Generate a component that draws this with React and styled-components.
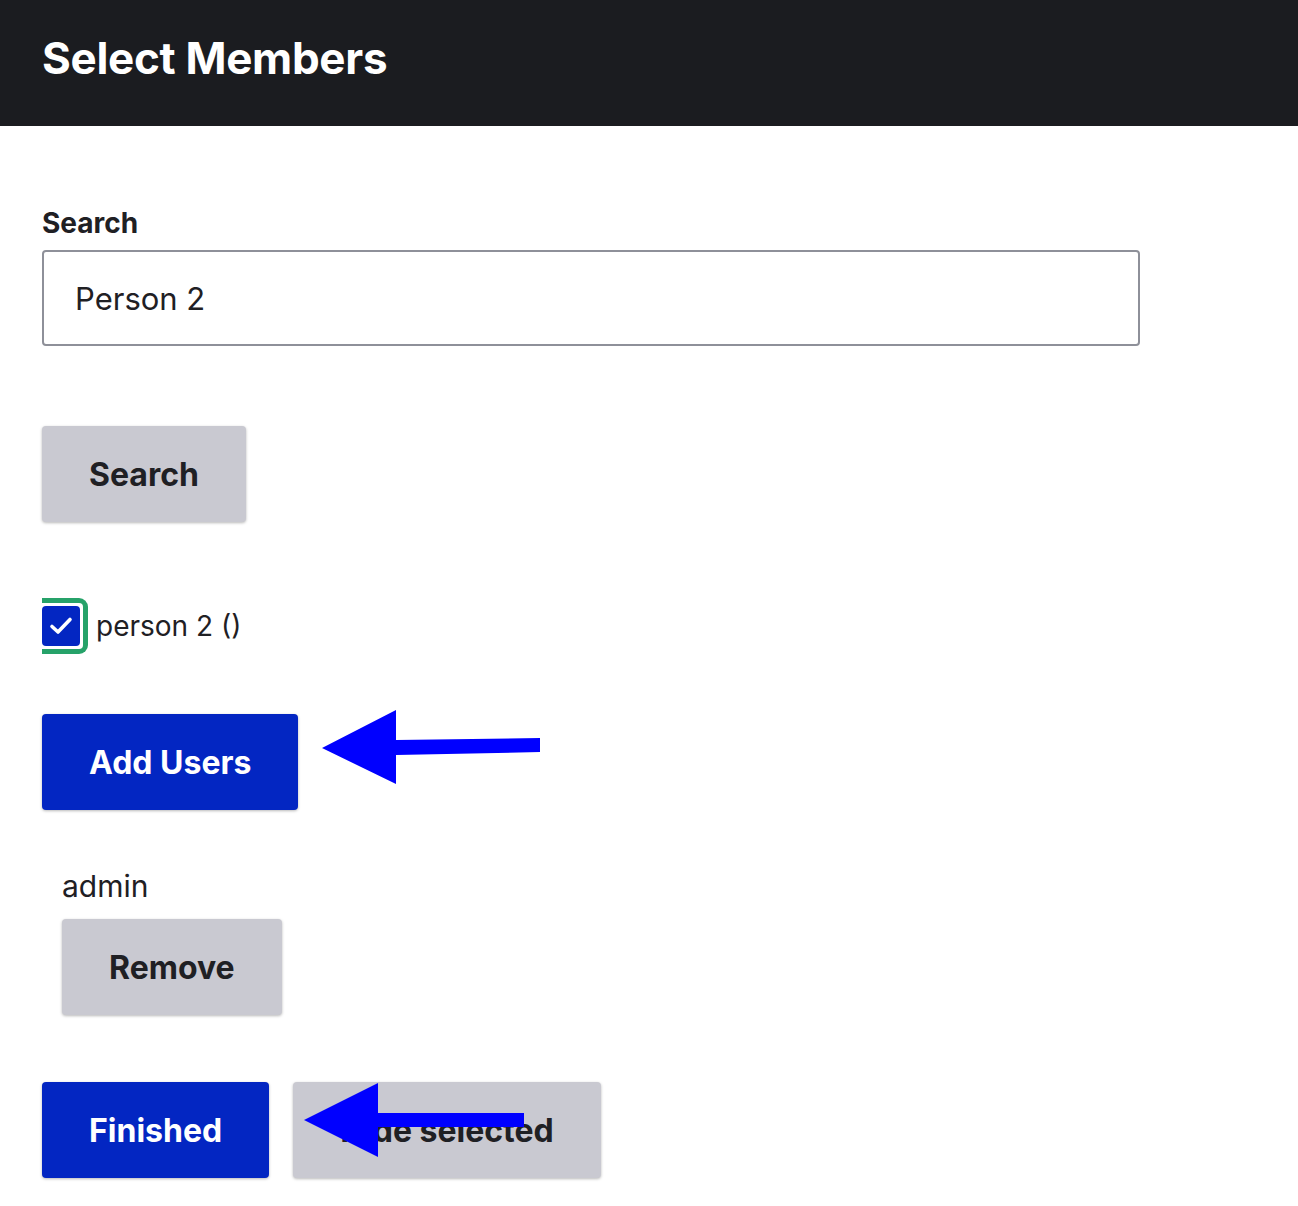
import React from "react";
import styled, { createGlobalStyle } from "styled-components";

const GlobalStyle = createGlobalStyle`
  body {
    margin: 0;
    background: #ffffff;
    font-family: Inter, "Noto Sans", "Liberation Sans", sans-serif;
    color: #1f2024;
  }
`;

const Header = styled.header`
  background: #1b1c20;
  height: 126px;
  display: flex;
  align-items: center;
  padding: 0 42px;
  box-sizing: border-box;
`;

const Title = styled.h1`
  margin: 0;
  color: #ffffff;
  font-size: 44px;
  font-weight: 700;
  letter-spacing: -0.3px;
  padding-bottom: 10px;
`;

const Main = styled.main`
  display: flex;
  flex-direction: column;
  align-items: flex-start;
  padding: 80px 42px 40px;
`;

const Label = styled.label`
  font-size: 28px;
  font-weight: 700;
  line-height: 34px;
  margin-bottom: 10px;
`;

const Input = styled.input`
  width: 1098px;
  height: 96px;
  box-sizing: border-box;
  border: 2px solid #8e9099;
  border-radius: 4px;
  padding: 0 31px;
  font-family: inherit;
  font-size: 31px;
  color: #1f2024;
  outline: none;
`;

const Button = styled.button`
  height: 96px;
  padding: 0 47px;
  border: 0;
  border-radius: 4px;
  font-family: inherit;
  font-size: 32px;
  font-weight: 700;
  background: ${(p) => (p.primary ? "#0326c2" : "#c9c9d1")};
  color: ${(p) => (p.primary ? "#ffffff" : "#1f2024")};
  box-shadow: 0 1px 3px rgba(0, 0, 0, 0.28);
  cursor: pointer;
`;

const Row = styled.div`
  position: relative;
  display: flex;
  align-items: center;
  gap: 24px;
  margin-top: ${(p) => p.top || 0}px;
  margin-left: ${(p) => p.indent || 0}px;
`;

const CheckRow = styled.div`
  display: flex;
  align-items: center;
  margin-top: 76px;
  gap: 8px;
`;

const FocusRing = styled.span`
  display: inline-flex;
  border: 5px solid #26a269;
  border-left: none;
  border-radius: 0 9px 9px 0;
  padding: 3px 3px 3px 0;
  background: #fff;
`;

const Box = styled.span`
  width: 38px;
  height: 40px;
  border-radius: 4px;
  background: #0326c2;
  display: flex;
  align-items: center;
  justify-content: center;
`;

const CheckLabel = styled.span`
  font-size: 28px;
`;

const Member = styled.div`
  display: flex;
  flex-direction: column;
  align-items: flex-start;
  margin-top: 56px;
  margin-left: 20px;
  gap: 13px;
`;

const MemberName = styled.span`
  font-size: 30px;
  line-height: 40px;
`;

const Arrow = styled.svg`
  position: absolute;
  left: ${(p) => p.x}px;
  top: ${(p) => p.y}px;
  pointer-events: none;
`;

export default function App() {
  return (
    <>
      <GlobalStyle />
      <Header>
        <Title>Select Members</Title>
      </Header>
      <Main>
        <Label htmlFor="search">Search</Label>
        <Input id="search" defaultValue="Person 2" />

        <Row top={80}>
          <Button>Search</Button>
        </Row>

        <CheckRow>
          <FocusRing>
            <Box>
              <svg width="24" height="20" viewBox="0 0 24 20">
                <path d="M3 10.5 L9 16 L21 3.5" fill="none" stroke="#fff" strokeWidth="3.6" strokeLinecap="round" strokeLinejoin="round" />
              </svg>
            </Box>
          </FocusRing>
          <CheckLabel>person 2 ()</CheckLabel>
        </CheckRow>

        <Row top={60}>
          <Button primary>Add Users</Button>
          <Arrow x={278} y={-4} width="222" height="78" viewBox="0 0 222 78">
            <polygon points="2,38 76,0 76,30 220,28 220,42 76,45 76,74" fill="#0000ff" />
          </Arrow>
        </Row>

        <Member>
          <MemberName>admin</MemberName>
          <Button>Remove</Button>
        </Member>

        <Row top={67}>
          <Button primary>Finished</Button>
          <Button>Hide selected</Button>
          <Arrow x={262} y={0} width="222" height="76" viewBox="0 0 222 76">
            <polygon points="0,38 74,1 74,31 220,31 220,45 74,45 74,75" fill="#0000ff" />
          </Arrow>
        </Row>
      </Main>
    </>
  );
}
